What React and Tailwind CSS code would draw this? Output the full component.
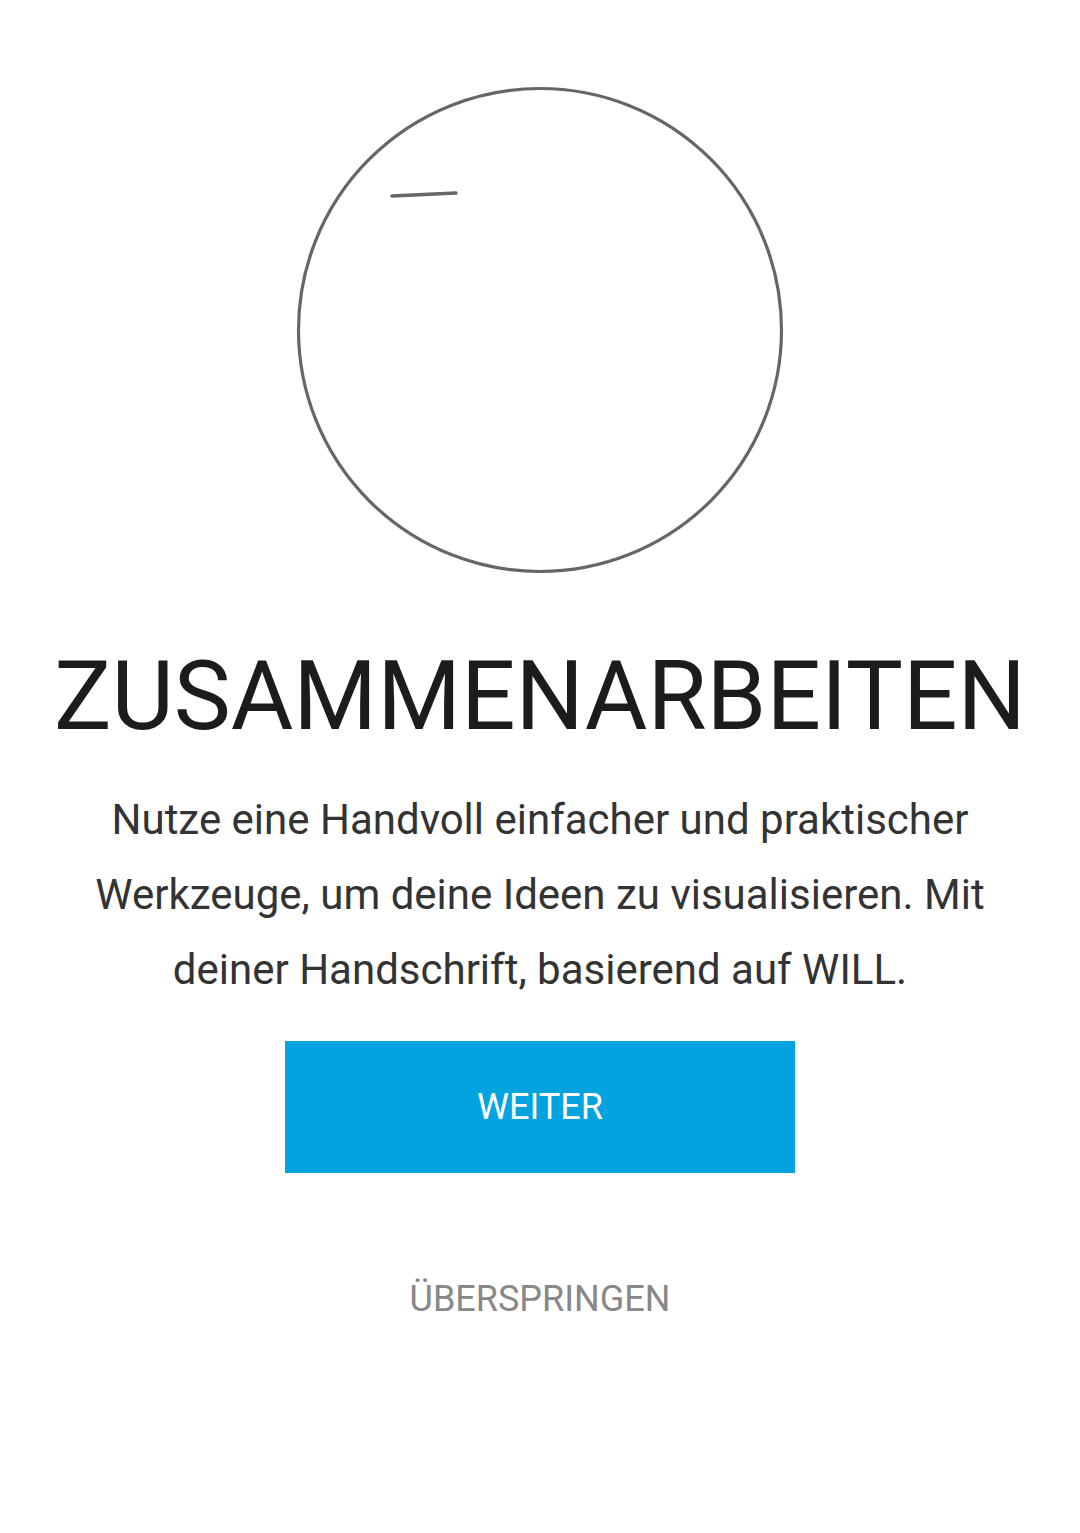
import React from 'react';

export default function App() {
  return (
    <div className="w-[1080px] h-[1533px] bg-white flex flex-col items-center font-['Roboto',sans-serif]">
      {/* Zeichnung */}
      <svg width="490" height="490" viewBox="0 0 490 490" className="mt-[85px] shrink-0">
        <circle cx="245" cy="245" r="241.5" fill="none" stroke="#666666" strokeWidth="3.2" />
        <path d="M97 111 L161 108" stroke="#666666" strokeWidth="3.5" strokeLinecap="round" fill="none" />
      </svg>

      <h1 className="mt-[73px] text-[96px] leading-[96px] font-normal text-[#1c1c1c] tracking-normal">
        ZUSAMMENARBEITEN
      </h1>

      <p className="mt-[38px] text-[42px] leading-[75px] text-[#333333] text-center">
        Nutze eine Handvoll einfacher und praktischer
        <br />
        Werkzeuge, um deine Ideen zu visualisieren. Mit
        <br />
        deiner Handschrift, basierend auf WILL.
      </p>

      <button className="mt-[34px] w-[510px] h-[132px] bg-[#03a3e0] text-white text-[36px] leading-none flex items-center justify-center">
        WEITER
      </button>

      <button className="mt-[106px] text-[36px] leading-[40px] text-[#888888]">
        ÜBERSPRINGEN
      </button>
    </div>
  );
}
